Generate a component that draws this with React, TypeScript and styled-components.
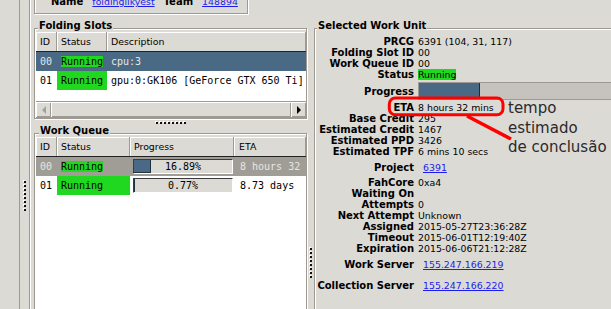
import React from 'react';
import styled, { createGlobalStyle } from 'styled-components';

const SHADE = '#9e9a91';
const FACE = '#dcdad5';
const SELECT = '#4a6984';
const GREEN = '#20d820';
const LINK = '#1c1cee';

const GlobalStyle = createGlobalStyle`
  html, body {
    margin: 0;
    padding: 0;
    background: ${FACE};
    overflow: hidden;
  }
  body {
    font-family: "DejaVu Sans", "Liberation Sans", sans-serif;
    font-size: 9.4px;
    color: #000;
  }
`;

const Window = styled.div`
  position: relative;
  width: 611px;
  height: 309px;
  overflow: hidden;
`;

const Desktop = styled.div`
  display: flex;
  height: 340px;
  margin-top: -22px;
`;

const ClientStrip = styled.div`
  width: 19px;
  flex: none;
  border-right: 1px solid ${SHADE};
`;

const SideSash = styled.div`
  width: 9px;
  flex: none;
  padding-top: 203px;
  display: flex;
  justify-content: center;
`;

const Main = styled.div`
  flex: 1;
  min-width: 0;
  display: flex;
  flex-direction: column;
  border-left: 1px solid ${SHADE};
  box-shadow: inset 1px 0 0 #fff;
  padding-left: 4px;
`;

const InfoBox = styled.div`
  box-sizing: border-box;
  width: 214px;
  padding: 17px 0 5px 16px;
  border: 1px solid ${SHADE};
  box-shadow: inset 1px 1px 0 #fff, 1px 1px 0 #fff;
  display: flex;
  align-items: center;
  gap: 9px;
  line-height: 12px;
  white-space: nowrap;
`;

const InfoLabel = styled.span`
  font-weight: bold;
  font-size: 10px;
`;

const Link = styled.a`
  color: ${LINK};
  text-decoration: underline;
  cursor: pointer;
`;

const Panes = styled.div`
  display: flex;
  flex: 1;
  min-height: 0;
`;

const LeftPane = styled.div`
  width: 273px;
  flex: none;
  display: flex;
  flex-direction: column;
`;

const HSash = styled.div`
  height: 8px;
  flex: none;
  padding-top: 3px;
  box-sizing: border-box;
  display: flex;
  justify-content: center;
`;

const VSash = styled.div`
  width: 7px;
  flex: none;
  padding-top: 234px;
  display: flex;
  justify-content: center;
`;

const RightPane = styled.div`
  width: 470px;
  flex: none;
  display: flex;
  flex-direction: column;
`;

const Grip = styled.div<{ $vertical?: boolean }>`
  display: flex;
  flex-direction: ${p => (p.$vertical ? 'column' : 'row')};
  gap: 2px;
  & > i {
    width: 2px;
    height: 2px;
    background: #111;
    box-shadow: -1px -1px 0 #fff;
  }
`;

const Frame = styled.fieldset<{ $top?: number; $grow?: boolean }>`
  margin: ${p => p.$top ?? 0}px 0 0;
  padding: 0 0 0 1px;
  border: 1px solid ${SHADE};
  box-shadow: inset 1px 1px 0 #fff, 1px 1px 0 #fff;
  min-width: 0;
  display: flex;
  flex-direction: column;
  ${p => (p.$grow ? 'flex: 1;' : '')}
`;

const Legend = styled.legend<{ $indent?: number }>`
  margin-left: ${p => p.$indent ?? 2}px;
  padding: 0 1px 4px;
  font-size: 10px;
  font-weight: bold;
  line-height: 8px;
  background: ${FACE};
  white-space: nowrap;
`;

const Table = styled.div<{ $grow?: boolean }>`
  margin-top: -2px;
  display: flex;
  flex-direction: column;
  ${p => (p.$grow ? 'flex: 1;' : '')}
`;

const HeadRow = styled.div<{ $cols: string }>`
  display: grid;
  grid-template-columns: ${p => p.$cols};
  border-bottom: 1px solid #222;
`;

const HeadCell = styled.div<{ $pad?: number }>`
  height: 19px;
  line-height: 19px;
  padding-left: ${p => p.$pad ?? 4}px;
  background: ${FACE};
  border-right: 1px solid ${SHADE};
  box-shadow: inset 1px 1px 0 #fff;
  overflow: hidden;
  white-space: nowrap;
`;

const Body = styled.div<{ $height?: number }>`
  background: #fff;
  ${p => (p.$height ? `height: ${p.$height}px;` : 'flex: 1;')}
`;

const Row = styled.div<{ $cols: string; $sel?: 'focus' | 'blur' }>`
  display: grid;
  grid-template-columns: ${p => p.$cols};
  height: 19px;
  font-family: "DejaVu Sans Mono", "Liberation Mono", monospace;
  font-size: 10px;
  background: ${p => (p.$sel === 'focus' ? SELECT : p.$sel === 'blur' ? '#a09d96' : '#fff')};
  color: ${p => (p.$sel ? '#e6e6e3' : '#000')};
`;

const Cell = styled.div<{ $pad?: number }>`
  display: flex;
  align-items: center;
  padding-left: ${p => p.$pad ?? 4}px;
  min-width: 0;
  overflow: hidden;
  white-space: nowrap;
`;

const StatusCell = styled(Cell)<{ $fill?: boolean }>`
  background: ${p => (p.$fill ? GREEN : 'transparent')};
  color: #000;
`;

const Badge = styled.span`
  background: ${GREEN};
  color: #000;
  line-height: 11px;
`;

const MiniBar = styled.div`
  display: grid;
  width: 98px;
  height: 13px;
  border: 1px solid;
  border-color: #3c3c3c #fff #fff #3c3c3c;
  background: ${FACE};
  color: #000;
`;

const BarFill = styled.div`
  grid-area: 1 / 1;
  box-sizing: border-box;
  background: ${SELECT};
  border-right: 1px solid #22313f;
  border-bottom: 1px solid #22313f;
`;

const BarText = styled.span`
  grid-area: 1 / 1;
  place-self: center;
  line-height: 13px;
`;

const HScroll = styled.div`
  display: flex;
  height: 15px;
  background: ${FACE};
  border-top: 1px solid ${SHADE};
  border-bottom: 1px solid ${SHADE};
`;

const ScrollButton = styled.div`
  width: 15px;
  flex: none;
  display: flex;
  align-items: center;
  justify-content: center;
  box-shadow: inset 1px 1px 0 #fff, inset -1px -1px 0 ${SHADE};
`;

const Thumb = styled.div`
  flex: 1;
  box-shadow: inset 1px 1px 0 #fff, inset -1px -1px 0 ${SHADE};
`;

const Arrow = styled.span<{ $dir: 'left' | 'right'; $dim?: boolean }>`
  width: 0;
  height: 0;
  border-top: 4px solid transparent;
  border-bottom: 4px solid transparent;
  ${p =>
    p.$dir === 'left'
      ? `border-right: 4px solid ${p.$dim ? '#a3a19c' : '#000'};`
      : `border-left: 4px solid ${p.$dim ? '#a3a19c' : '#000'};`}
`;

const KVList = styled.div`
  padding-top: 2.5px;
`;

const KVRow = styled.div<{ $h?: number }>`
  display: flex;
  align-items: center;
  height: ${p => p.$h ?? 10.9}px;
  white-space: nowrap;
`;

const Key = styled.div`
  width: 98px;
  flex: none;
  margin-right: 4px;
  text-align: right;
  font-weight: bold;
  font-size: 10px;
`;

const Val = styled.div<{ $link?: boolean }>`
  padding-left: ${p => (p.$link ? 5 : 0)}px;
`;

const StatusValue = styled.span`
  background: ${GREEN};
  line-height: 11px;
`;

const BigBar = styled.div<{ $width: number }>`
  display: flex;
  width: ${p => p.$width}px;
  height: 16px;
  margin: 1.5px 0 2.5px;
  border: 1px solid ${SHADE};
  background: #c6c3be;
`;

const BigFill = styled.div`
  box-sizing: border-box;
  background: ${SELECT};
  border-right: 1px solid #1f2c38;
  border-bottom: 1px solid #1f2c38;
`;

const Overlay = styled.svg`
  position: absolute;
  left: 0;
  top: 0;
  pointer-events: none;
`;

const Note = styled.div`
  position: absolute;
  left: 508px;
  top: 99px;
  font-size: 15px;
  line-height: 19.5px;
  color: #2a2a2a;
  white-space: nowrap;
`;

const dots = (n: number) => Array.from({ length: n }, (_, i) => <i key={i} />);

const SLOT_COLS = '21px 50px 1fr';
const QUEUE_COLS = '21px 73px 104px 1fr';

const queue = [
  { id: '00', pct: 16.89, eta: '8 hours 32 mins', sel: 'blur' as const },
  { id: '01', pct: 0.77, eta: '8.73 days' },
];

const details: [string, React.ReactNode][] = [
  ['PRCG', '6391 (104, 31, 117)'],
  ['Folding Slot ID', '00'],
  ['Work Queue ID', '00'],
  ['Status', <StatusValue>Running</StatusValue>],
];

const details2: [string, string][] = [
  ['ETA', '8 hours 32 mins'],
  ['Base Credit', '295'],
  ['Estimated Credit', '1467'],
  ['Estimated PPD', '3426'],
  ['Estimated TPF', '6 mins 10 secs'],
];

const details3: [string, string][] = [
  ['FahCore', '0xa4'],
  ['Waiting On', ''],
  ['Attempts', '0'],
  ['Next Attempt', 'Unknown'],
  ['Assigned', '2015-05-27T23:36:28Z'],
  ['Timeout', '2015-06-01T12:19:40Z'],
  ['Expiration', '2015-06-06T21:12:28Z'],
];

export default function App() {
  const progress = 16.89;
  return (
    <Window>
      <GlobalStyle />
      <Desktop>
        <ClientStrip />
        <SideSash>
          <Grip $vertical>{dots(8)}</Grip>
        </SideSash>
        <Main>
          <InfoBox>
            <InfoLabel>Name</InfoLabel>
            <Link>foldingilkyest</Link>
            <InfoLabel>Team</InfoLabel>
            <Link>148894</Link>
          </InfoBox>
          <Panes>
            <LeftPane>
              <Frame $top={8}>
                <Legend>Folding Slots</Legend>
                <Table>
                  <HeadRow $cols={SLOT_COLS}>
                    <HeadCell>ID</HeadCell>
                    <HeadCell>Status</HeadCell>
                    <HeadCell>Description</HeadCell>
                  </HeadRow>
                  <Body $height={49}>
                    <Row $cols={SLOT_COLS} $sel="focus">
                      <Cell>00</Cell>
                      <StatusCell>
                        <Badge>Running</Badge>
                      </StatusCell>
                      <Cell>cpu:3</Cell>
                    </Row>
                    <Row $cols={SLOT_COLS}>
                      <Cell>01</Cell>
                      <StatusCell $fill>Running</StatusCell>
                      <Cell>gpu:0:GK106 [GeForce GTX 650 Ti]</Cell>
                    </Row>
                  </Body>
                  <HScroll>
                    <ScrollButton>
                      <Arrow $dir="left" $dim />
                    </ScrollButton>
                    <Thumb />
                    <ScrollButton>
                      <Arrow $dir="right" />
                    </ScrollButton>
                  </HScroll>
                </Table>
              </Frame>
              <HSash>
                <Grip>{dots(8)}</Grip>
              </HSash>
              <Frame $grow>
                <Legend $indent={3}>Work Queue</Legend>
                <Table $grow>
                  <HeadRow $cols={QUEUE_COLS}>
                    <HeadCell>ID</HeadCell>
                    <HeadCell>Status</HeadCell>
                    <HeadCell>Progress</HeadCell>
                    <HeadCell $pad={5}>ETA</HeadCell>
                  </HeadRow>
                  <Body>
                    {queue.map(item => (
                      <Row key={item.id} $cols={QUEUE_COLS} $sel={item.sel}>
                        <Cell>{item.id}</Cell>
                        {item.sel ? (
                          <StatusCell>
                            <Badge>Running</Badge>
                          </StatusCell>
                        ) : (
                          <StatusCell $fill>Running</StatusCell>
                        )}
                        <Cell $pad={3}>
                          <MiniBar>
                            <BarFill style={{ width: `${item.pct}%` }} />
                            <BarText>{item.pct.toFixed(2)}%</BarText>
                          </MiniBar>
                        </Cell>
                        <Cell $pad={6}>{item.eta}</Cell>
                      </Row>
                    ))}
                  </Body>
                </Table>
              </Frame>
            </LeftPane>
            <VSash>
              <Grip $vertical>{dots(8)}</Grip>
            </VSash>
            <RightPane>
              <Frame $top={8} $grow>
                <Legend $indent={1}>Selected Work Unit</Legend>
                <KVList>
                  {details.map(([k, v]) => (
                    <KVRow key={k}>
                      <Key>{k}</Key>
                      <Val>{v}</Val>
                    </KVRow>
                  ))}
                  <KVRow $h={22}>
                    <Key>Progress</Key>
                    <BigBar $width={752}>
                      <BigFill style={{ width: `${progress}%` }} />
                    </BigBar>
                  </KVRow>
                  {details2.map(([k, v]) => (
                    <KVRow key={k}>
                      <Key>{k}</Key>
                      <Val>{v}</Val>
                    </KVRow>
                  ))}
                  <KVRow $h={21}>
                    <Key>Project</Key>
                    <Val $link>
                      <Link>6391</Link>
                    </Val>
                  </KVRow>
                  {details3.map(([k, v]) => (
                    <KVRow key={k}>
                      <Key>{k}</Key>
                      <Val>{v}</Val>
                    </KVRow>
                  ))}
                  <KVRow $h={21}>
                    <Key>Work Server</Key>
                    <Val $link>
                      <Link>155.247.166.219</Link>
                    </Val>
                  </KVRow>
                  <KVRow $h={21}>
                    <Key>Collection Server</Key>
                    <Val $link>
                      <Link>155.247.166.220</Link>
                    </Val>
                  </KVRow>
                </KVList>
              </Frame>
            </RightPane>
          </Panes>
        </Main>
      </Desktop>
      <Overlay width={611} height={309} viewBox="0 0 611 309">
        <rect x={389.3} y={98} width={113.7} height={16.8} rx={6} fill="none" stroke="#f00" strokeWidth={3} />
        <line x1={467} y1={116} x2={511} y2={139} stroke="#f00" strokeWidth={3.5} />
      </Overlay>
      <Note>
        tempo
        <br />
        estimado
        <br />
        de conclusão
      </Note>
    </Window>
  );
}
